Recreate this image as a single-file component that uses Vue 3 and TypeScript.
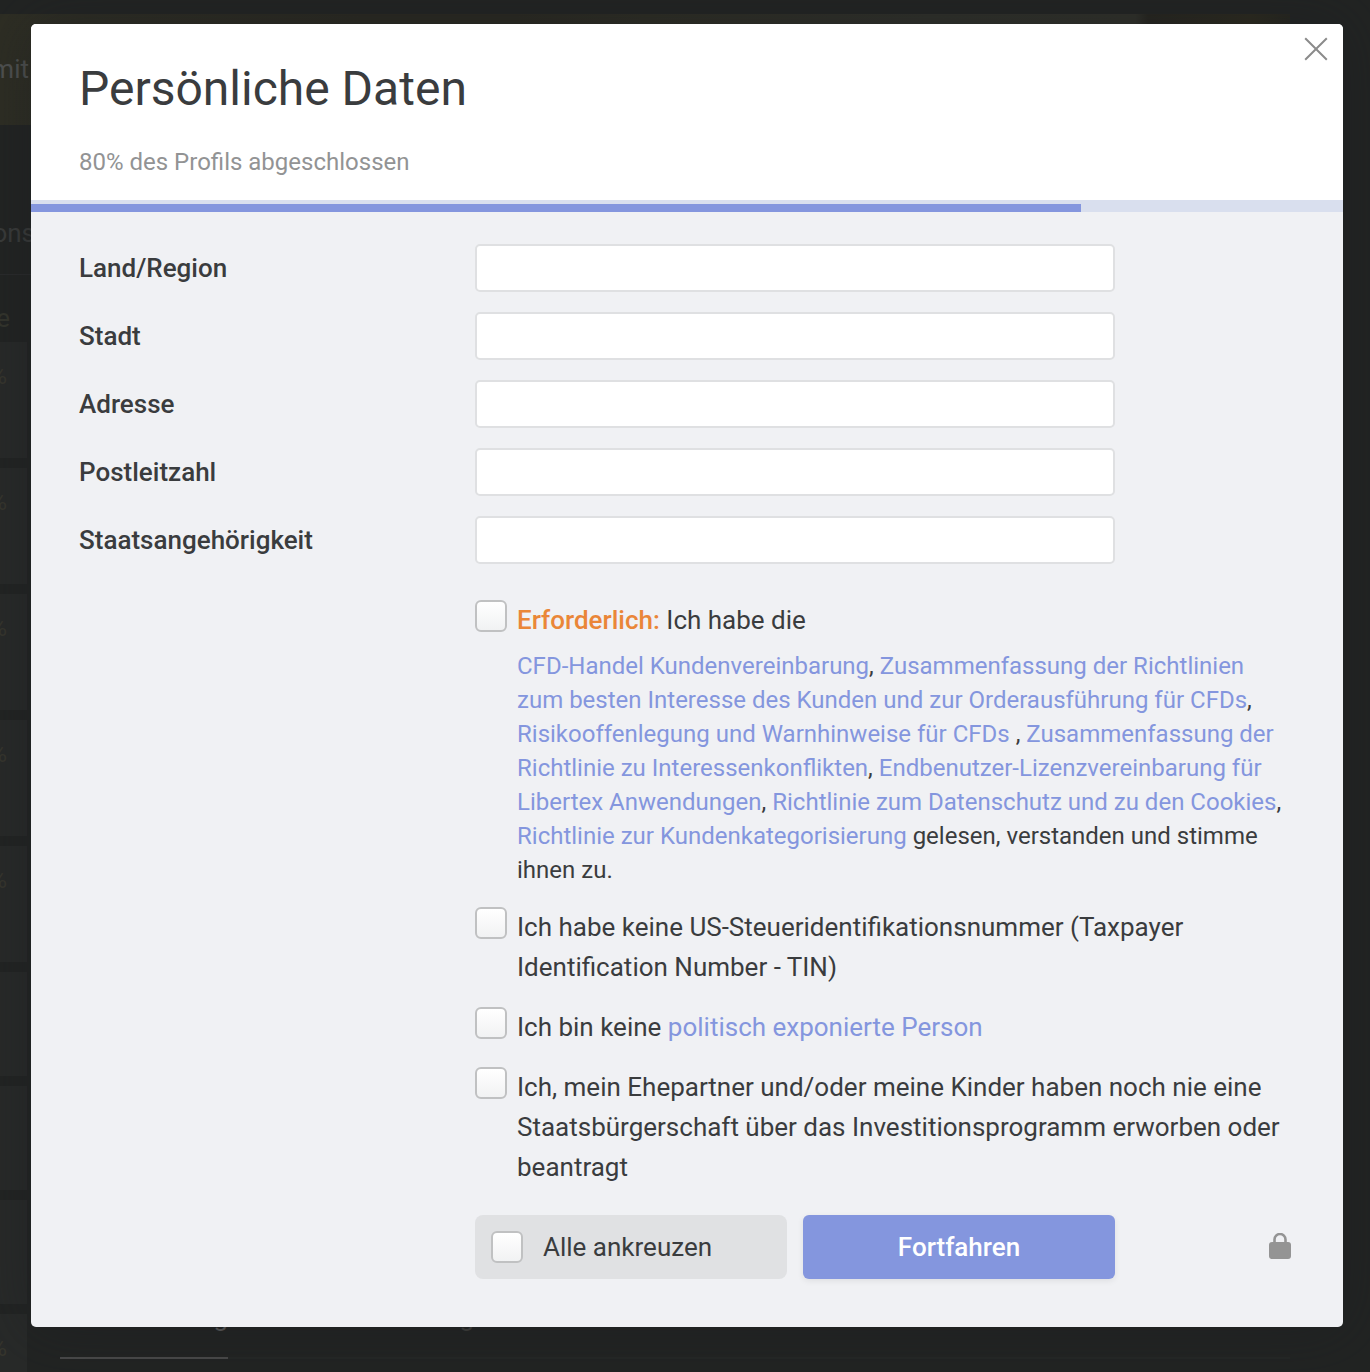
<script setup lang="ts">
import { computed, reactive, ref } from 'vue'

interface Field {
  id: string
  label: string
}

const progress = ref(80)

const fields: Field[] = [
  { id: 'country', label: 'Land/Region' },
  { id: 'city', label: 'Stadt' },
  { id: 'address', label: 'Adresse' },
  { id: 'zip', label: 'Postleitzahl' },
  { id: 'nationality', label: 'Staatsangehörigkeit' },
]

const values = reactive<Record<string, string>>({
  country: '',
  city: '',
  address: '',
  zip: '',
  nationality: '',
})

const agreed = reactive({ terms: false, tin: false, pep: false, citizenship: false })

const allChecked = computed<boolean>({
  get: () => Object.values(agreed).every(Boolean),
  set: (checked) => {
    agreed.terms = checked
    agreed.tin = checked
    agreed.pep = checked
    agreed.citizenship = checked
  },
})

const tallCards = 5
const shortCards = 3
</script>

<template>
  <div class="app">
    <div class="page" aria-hidden="true">
      <div class="banner"><span>mit</span></div>
      <div class="page-body">
        <div class="rail">
          <div class="rail-title"><span>ons</span></div>
          <div class="rail-head"><span>e</span></div>
          <div v-for="n in tallCards" :key="'t' + n" class="card"><span>%</span></div>
          <div v-for="n in shortCards" :key="'s' + n" class="card short"></div>
          <div class="card"><span>%</span></div>
        </div>
        <div class="tabs">
          <span class="tab active">g</span>
          <span class="tab wide">g</span>
          <span class="tab rest"></span>
        </div>
      </div>
    </div>

    <div class="overlay">
      <section class="dialog" role="dialog" aria-modal="true" aria-labelledby="dialog-title">
        <header class="head">
          <h1 id="dialog-title">Persönliche Daten</h1>
          <p>{{ progress }}% des Profils abgeschlossen</p>
          <button class="close" type="button" aria-label="Schließen">
            <svg viewBox="0 0 24 24" width="24" height="24" fill="none" stroke="#8b8b8b" stroke-width="2">
              <path d="M1.200 1.200 22.800 22.800M22.800 1.200 1.200 22.800" />
            </svg>
          </button>
        </header>
        <div class="progress"><div class="bar" :style="{ width: progress + '%' }"></div></div>

        <form class="form" @submit.prevent>
          <div class="fields">
            <div v-for="f in fields" :key="f.id" class="field">
              <label :for="f.id">{{ f.label }}</label>
              <input :id="f.id" v-model="values[f.id]" type="text" class="text" />
            </div>
          </div>

          <div class="consents">
            <div class="consent">
              <input id="terms" v-model="agreed.terms" type="checkbox" class="check" />
              <div class="copy">
                <label for="terms"><strong>Erforderlich:</strong> Ich habe die</label>
                <p>
                  <a href="#">CFD-Handel Kundenvereinbarung</a>,
                  <a href="#">Zusammenfassung der Richtlinien zum besten Interesse des Kunden und zur Orderausführung für CFDs</a>,
                  <a href="#">Risikooffenlegung und Warnhinweise für CFDs</a> ,
                  <a href="#">Zusammenfassung der Richtlinie zu Interessenkonflikten</a>,
                  <a href="#">Endbenutzer-Lizenzvereinbarung für Libertex Anwendungen</a>,
                  <a href="#">Richtlinie zum Datenschutz und zu den Cookies</a>,
                  <a href="#">Richtlinie zur Kundenkategorisierung</a> gelesen, verstanden und stimme ihnen zu.
                </p>
              </div>
            </div>
            <div class="consent">
              <input id="tin" v-model="agreed.tin" type="checkbox" class="check" />
              <label for="tin" class="copy">Ich habe keine US-Steueridentifikationsnummer (Taxpayer Identification Number - TIN)</label>
            </div>
            <div class="consent">
              <input id="pep" v-model="agreed.pep" type="checkbox" class="check" />
              <label for="pep" class="copy">Ich bin keine <a href="#">politisch exponierte Person</a></label>
            </div>
            <div class="consent">
              <input id="citizenship" v-model="agreed.citizenship" type="checkbox" class="check" />
              <label for="citizenship" class="copy">Ich, mein Ehepartner und/oder meine Kinder haben noch nie eine Staatsbürgerschaft über das Investitionsprogramm erworben oder beantragt</label>
            </div>
          </div>

          <div class="actions">
            <label class="all" for="all">
              <input id="all" v-model="allChecked" type="checkbox" class="check" />
              <span>Alle ankreuzen</span>
            </label>
            <button class="submit" type="submit">Fortfahren</button>
            <svg class="lock" viewBox="0 0 22 26" width="22" height="26" aria-hidden="true">
              <rect y="9" width="22" height="17" rx="3" fill="#949494" />
              <path d="M5.500 10V6.500a5.500 5.500 0 0 1 11 0V10" fill="none" stroke="#949494" stroke-width="2.600" />
            </svg>
          </div>
        </form>
      </section>
    </div>
  </div>
</template>

<style>
body {
  margin: 0;
  background: #222423;
}
</style>

<style scoped>
.app {
  position: relative;
  min-height: 100vh;
  overflow: hidden;
  background: #222423;
  color: #3a3c3e;
  font: 26px/40px Roboto, sans-serif;
}

/* dimmed page behind the dialog */
.page {
  position: absolute;
  inset: 0;
  display: flex;
  flex-direction: column;
  overflow: hidden;
}

.banner {
  flex: none;
  height: 111px;
  margin: 14px 80px 0 0;
  background: linear-gradient(90deg, #2e2e24 0, #2a2921 28%, #2a2921 40%, #2d2d24 50%, #2f302a 72%, #30312a 88%, #26251f 89%, #2c2a1e 97%, #26261f 100%);
}

.banner span {
  display: flex;
  justify-content: flex-end;
  width: 29px;
  padding-top: 35px;
  color: #505251;
}

.page-body {
  flex: 1;
  display: flex;
  min-height: 0;
}

.rail {
  flex: none;
  width: 27px;
}

.rail span {
  display: flex;
  justify-content: flex-end;
}

.rail-title {
  width: 35px;
  height: 150px;
  box-sizing: border-box;
  padding-top: 88px;
  border-bottom: 1px solid #2a2b2c;
  color: #3a3c3b;
}

.rail-head {
  width: 10px;
  height: 44px;
  padding-top: 23px;
  color: #34352d;
}

.card {
  height: 116px;
  margin-bottom: 10px;
  background: #282a29;
}

.card span {
  width: 7px;
  padding-top: 14px;
  color: #37362e;
  font-size: 24px;
}

.card.short {
  height: 104px;
}

.tabs {
  flex: 1;
  display: flex;
  align-items: flex-end;
  padding: 0 80px 13px 33px;
}

.tab {
  box-sizing: border-box;
  height: 62px;
  border-bottom: 2px solid #252726;
  color: #40403e;
  text-align: right;
}

.tab.active {
  width: 168px;
  border-color: #4a4a4a;
  color: #5c5c5c;
}

.tab.wide {
  width: 246px;
}

.tab.rest {
  flex: 1;
}

/* dialog */
.overlay {
  position: relative;
  padding: 24px 27px 45px 31px;
}

.dialog {
  overflow: hidden;
  border-radius: 5px;
  background: #f0f1f4;
  box-shadow: 0 0 60px rgba(28, 29, 34, 0.5);
}

.head {
  position: relative;
  padding: 37px 48px 18px;
  background: #fff;
}

.head h1 {
  margin: 0;
  font-size: 48px;
  line-height: 56px;
  font-weight: 400;
}

.head p {
  margin: 25px 0 0;
  color: #929394;
  font-size: 24px;
}

.close {
  position: absolute;
  top: 13px;
  right: 15px;
  padding: 0;
  border: 0;
  background: none;
  cursor: pointer;
}

.close svg,
.lock {
  display: block;
}

.progress {
  padding-top: 4px;
  background: #d9dfee;
}

.bar {
  height: 8px;
  background: #8496de;
}

.form {
  padding: 32px 48px 48px;
}

.fields,
.consents {
  display: flex;
  flex-direction: column;
  gap: 20px;
}

.field {
  display: flex;
  align-items: center;
}

.field label {
  flex: none;
  width: 396px;
  font-weight: 500;
}

.text {
  flex: 0 1 640px;
  min-width: 0;
  box-sizing: border-box;
  height: 48px;
  padding: 0 14px;
  border: 2px solid #dfe0e2;
  border-radius: 5px;
  background: #fff;
  color: inherit;
  font: inherit;
}

.consents,
.actions {
  margin-left: 396px;
}

.consents {
  margin-top: 36px;
}

.consent {
  display: flex;
  align-items: flex-start;
  gap: 10px;
}

.check {
  appearance: none;
  flex: none;
  box-sizing: border-box;
  width: 32px;
  height: 32px;
  margin: 0;
  border: 2px solid #c0c1c2;
  border-radius: 6px;
  background: linear-gradient(#fff, #f1f2f3);
}

.check:checked {
  background: #8496de;
}

.copy {
  flex: 1;
}

.copy label {
  display: block;
}

.copy strong {
  color: #ea8638;
  font-weight: 500;
}

.copy p {
  margin: 9px 0 0;
  font-size: 24px;
  line-height: 34px;
}

.copy a {
  color: #8496de;
  text-decoration: none;
}

.actions {
  display: flex;
  align-items: center;
  gap: 16px;
  margin-top: 28px;
}

.all,
.submit {
  flex: 0 1 312px;
  box-sizing: border-box;
  height: 64px;
}

.all {
  display: flex;
  align-items: center;
  gap: 20px;
  padding: 0 16px;
  border-radius: 8px;
  background: #e0e1e3;
}

.submit {
  padding: 0;
  border: 0;
  border-radius: 6px;
  background: #8496de;
  box-shadow: 0 2px 6px rgba(0, 0, 0, 0.08);
  color: #fff;
  font: inherit;
  font-weight: 500;
  cursor: pointer;
}

.lock {
  flex: none;
  margin: 0 4px 2px auto;
}
</style>
